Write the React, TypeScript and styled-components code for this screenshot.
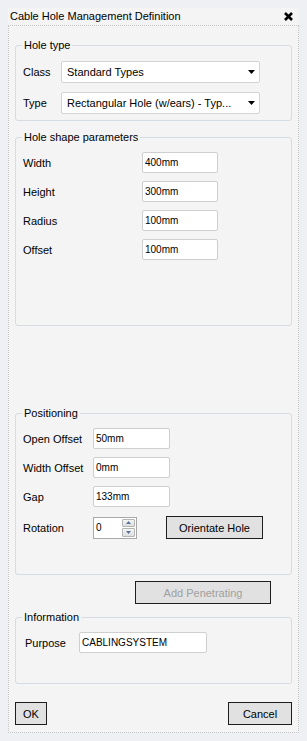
import React from "react";
import styled, { createGlobalStyle } from "styled-components";

const GlobalStyle = createGlobalStyle`
  html, body {
    margin: 0;
    padding: 0;
    background: #eef0f3;
    font-family: "Liberation Sans", Arial, sans-serif;
    font-size: 11px;
    color: #000;
  }
  * { box-sizing: border-box; }
`;

const Window = styled.div`
  margin: 8px 8px 8px 8px;
  width: 291px;
  background: #f4f4f4;
  display: flex;
  flex-direction: column;
`;

const TitleBar = styled.div`
  height: 17px;
  display: flex;
  align-items: center;
  justify-content: space-between;
  padding: 0 6px 0 2px;
  font-size: 11px;
  line-height: 17px;
`;

const CloseButton = styled.button`
  border: 0;
  background: transparent;
  padding: 0;
  width: 9px;
  height: 9px;
  display: flex;
  cursor: pointer;
`;

const Content = styled.div`
  height: 708px;
  border: 1px dotted #c4c4c4;
  padding: 0 6px 7px;
  display: flex;
  flex-direction: column;
`;

const Group = styled.fieldset<{ $mt: number; $pt: number; $pb: number; $pl?: number }>`
  margin: ${(p) => p.$mt}px 0 0 0;
  min-width: 0;
  border: 1px solid #d6dce2;
  border-radius: 3px;
  padding: ${(p) => p.$pt}px 6px ${(p) => p.$pb}px ${(p) => p.$pl ?? 7}px;
  display: flex;
  flex-direction: column;
`;

const Legend = styled.legend<{ $ml: number }>`
  margin-left: ${(p) => p.$ml}px;
  padding: 0 2px;
  font-size: 11px;
  line-height: 14px;
  height: 14px;
`;

const Rows = styled.div<{ $gap: number }>`
  display: flex;
  flex-direction: column;
  gap: ${(p) => p.$gap}px;
`;

const Row = styled.div<{ $mt?: number }>`
  display: flex;
  align-items: center;
  margin-top: ${(p) => p.$mt ?? 0}px;
`;

const Label = styled.span<{ $w: number }>`
  width: ${(p) => p.$w}px;
  flex: none;
  font-size: 11px;
  white-space: nowrap;
`;

const Spacer = styled.span<{ $w: number }>`
  width: ${(p) => p.$w}px;
  flex: none;
`;

const TextBox = styled.input<{ $w: number }>`
  width: ${(p) => p.$w}px;
  height: 21px;
  border: 1px solid #cfcfcf;
  border-radius: 2px;
  background: #fff;
  padding: 0 2px;
  margin: 0;
  font-family: "Liberation Sans", Arial, sans-serif;
  font-size: 10px;
  color: #000;
  outline: none;
`;

const Combo = styled.div`
  width: 199px;
  height: 22px;
  border: 1px solid #d4d4d4;
  border-radius: 2px;
  background: #fff;
  display: flex;
  align-items: center;
  justify-content: space-between;
  padding: 0 4px 0 5px;
  font-size: 11px;
  white-space: nowrap;
  overflow: hidden;
`;

const Spinner = styled.div`
  width: 44px;
  height: 22px;
  border: 1px solid #a9a9a9;
  background: #fff;
  display: flex;
  align-items: stretch;
`;

const SpinValue = styled.span`
  flex: 1;
  display: flex;
  align-items: center;
  padding-left: 2px;
  font-size: 10px;
`;

const SpinButtons = styled.div`
  width: 14px;
  display: flex;
  flex-direction: column;
  gap: 1px;
  padding: 1px 1px 1px 0;
`;

const SpinButton = styled.div`
  flex: 1;
  border: 1px solid #b4b4b4;
  border-radius: 1px;
  background: linear-gradient(#f6f6f6, #dedede);
  display: flex;
  align-items: center;
  justify-content: center;
`;

const Button = styled.button<{ $w: number; $disabled?: boolean }>`
  width: ${(p) => p.$w}px;
  height: 23px;
  margin: 0;
  padding: 0;
  border: 1px solid #1e1e1e;
  background: #e1e1e1;
  font-family: "Liberation Sans", Arial, sans-serif;
  font-size: 11px;
  color: ${(p) => (p.$disabled ? "#a0a0a0" : "#000")};
`;

const AddRow = styled.div`
  display: flex;
  justify-content: flex-end;
  margin-top: 6px;
  padding-right: 21px;
`;

const Footer = styled.div`
  margin-top: auto;
  display: flex;
  justify-content: space-between;
`;

const DownArrow = () => (
  <svg width="7" height="4" viewBox="0 0 7 4">
    <path d="M0 0H7L3.5 4Z" fill="#000" />
  </svg>
);

const SpinArrow = ({ up }: { up?: boolean }) => (
  <svg width="5" height="3" viewBox="0 0 5 3">
    <path d={up ? "M0 3H5L2.5 0Z" : "M0 0H5L2.5 3Z"} fill="#5a6e96" />
  </svg>
);

const App: React.FC = () => (
  <>
    <GlobalStyle />
    <Window>
      <TitleBar>
        <span>Cable Hole Management Definition</span>
        <CloseButton aria-label="Close">
          <svg width="9" height="9" viewBox="0 0 9 9">
            <path d="M1 1L8 8M8 1L1 8" stroke="#000" strokeWidth="2.6" />
          </svg>
        </CloseButton>
      </TitleBar>
      <Content>
        <Group $mt={12} $pt={9} $pb={6}>
          <Legend $ml={-1}>Hole type</Legend>
          <Rows $gap={9}>
            <Row>
              <Label $w={38}>Class</Label>
              <Combo>
                <span>Standard Types</span>
                <DownArrow />
              </Combo>
            </Row>
            <Row>
              <Label $w={38}>Type</Label>
              <Combo>
                <span>Rectangular Hole (w/ears) - Typ...</span>
                <DownArrow />
              </Combo>
            </Row>
          </Rows>
        </Group>

        <Group $mt={9} $pt={8} $pb={65}>
          <Legend $ml={-1}>Hole shape parameters</Legend>
          <Rows $gap={8}>
            <Row>
              <Label $w={119}>Width</Label>
              <TextBox $w={76} defaultValue="400mm" />
            </Row>
            <Row>
              <Label $w={119}>Height</Label>
              <TextBox $w={76} defaultValue="300mm" />
            </Row>
            <Row>
              <Label $w={119}>Radius</Label>
              <TextBox $w={76} defaultValue="100mm" />
            </Row>
            <Row>
              <Label $w={119}>Offset</Label>
              <TextBox $w={76} defaultValue="100mm" />
            </Row>
          </Rows>
        </Group>

        <Group $mt={80} $pt={8} $pb={35}>
          <Legend $ml={-1}>Positioning</Legend>
          <Rows $gap={8}>
            <Row>
              <Label $w={70}>Open Offset</Label>
              <TextBox $w={77} defaultValue="50mm" />
            </Row>
            <Row>
              <Label $w={70}>Width Offset</Label>
              <TextBox $w={77} defaultValue="0mm" />
            </Row>
            <Row>
              <Label $w={70}>Gap</Label>
              <TextBox $w={77} defaultValue="133mm" />
            </Row>
            <Row $mt={1}>
              <Label $w={70}>Rotation</Label>
              <Spinner>
                <SpinValue>0</SpinValue>
                <SpinButtons>
                  <SpinButton>
                    <SpinArrow up />
                  </SpinButton>
                  <SpinButton>
                    <SpinArrow />
                  </SpinButton>
                </SpinButtons>
              </Spinner>
              <Spacer $w={29} />
              <Button $w={97}>Orientate Hole</Button>
            </Row>
          </Rows>
        </Group>

        <AddRow>
          <Button $w={136} $disabled disabled>
            Add Penetrating
          </Button>
        </AddRow>

        <Group $mt={6} $pt={8} $pb={30} $pl={9}>
          <Legend $ml={-3}>Information</Legend>
          <Row>
            <Label $w={54}>Purpose</Label>
            <TextBox $w={128} defaultValue="CABLINGSYSTEM" />
          </Row>
        </Group>

        <Footer>
          <Button $w={32}>OK</Button>
          <Button $w={64}>Cancel</Button>
        </Footer>
      </Content>
    </Window>
  </>
);

export default App;
